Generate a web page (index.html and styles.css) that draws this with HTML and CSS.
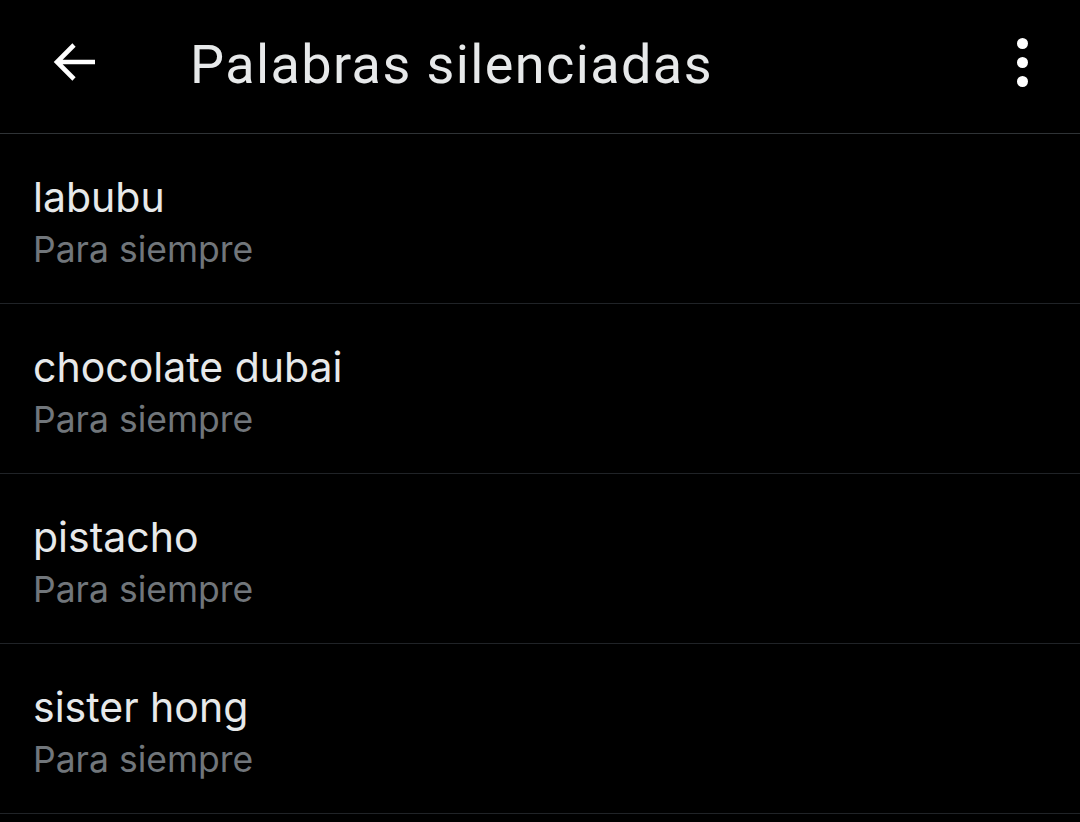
FILE: index.html
```html
<!DOCTYPE html>
<html lang="es">
<head>
<meta charset="utf-8">
<link rel="stylesheet" href="styles.css">
</head>
<body>
<header class="bar">
  <button class="icon back" aria-label="Atrás">
    <svg width="48" height="44" viewBox="0 0 48 44"><path d="M45 22H8M24 5L7 22l17 17" fill="none" stroke="#fff" stroke-width="4.6"/></svg>
  </button>
  <h1 class="title">Palabras silenciadas</h1>
  <button class="icon more" aria-label="Más">
    <span class="dot"></span><span class="dot"></span><span class="dot"></span>
  </button>
</header>
<ul class="list">
  <li class="row"><div class="word">labubu</div><div class="dur">Para siempre</div></li>
  <li class="row"><div class="word">chocolate dubai</div><div class="dur">Para siempre</div></li>
  <li class="row"><div class="word">pistacho</div><div class="dur">Para siempre</div></li>
  <li class="row"><div class="word">sister hong</div><div class="dur">Para siempre</div></li>
</ul>
</body>
</html>
```
FILE: styles.css
```css
html, body { margin: 0; padding: 0; background: #000; }
body { width: 1080px; height: 822px; overflow: hidden; font-family: Roboto, "Liberation Sans", sans-serif; color: #e7e9ea; }
.bar { display: flex; align-items: center; border-bottom: 1px solid #2f3336; box-sizing: border-box; height: 134px; }
.icon { background: none; border: 0; padding: 0; display: flex; align-items: center; justify-content: center; }
.back { width: 48px; height: 44px; margin-left: 50px; margin-top: -10px; }
.title { margin: -4px 0 0 92px; font-size: 54px; font-weight: 400; color: #e7e9ea; flex: 1; letter-spacing: 1.4px; }
.more { flex-direction: column; gap: 8px; width: 12px; margin-right: 52px; margin-top: -8px; }
.dot { width: 11px; height: 11px; border-radius: 50%; background: #fff; }
.list { list-style: none; margin: 0; padding: 0; }
.row { height: 170px; box-sizing: border-box; border-bottom: 1px solid #202327; padding: 37px 0 0 33px; font-family: Inter, Roboto, sans-serif; }
.word { font-size: 41px; line-height: 52px; color: #e7e9ea; }
.dur { font-size: 35.5px; line-height: 48px; margin-top: 3px; color: #71767b; }
```
